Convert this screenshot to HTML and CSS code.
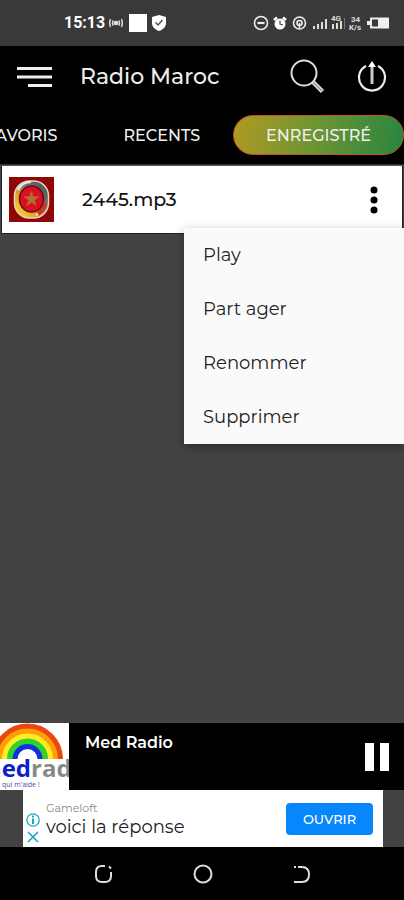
FILE: index.html
```html
<!DOCTYPE html>
<html lang="fr">
<head>
<meta charset="utf-8">
<meta name="viewport" content="width=device-width, initial-scale=1">
<title>Radio Maroc</title>
<link rel="stylesheet" href="styles.css">
</head>
<body>
<div class="status">
  <div class="status-group">
    <span class="clock">15:13</span>
    <svg width="14" height="12" viewBox="0 0 14 12" fill="none" stroke="#ddd" stroke-width="1.5"><circle cx="7" cy="6" r="1.6" fill="#ddd"/><path d="M4.300 3.500q-1.500 2.500 0 5M9.700 3.500q1.500 2.500 0 5M1.500 2q-1.500 4 0 8M12.500 2q1.500 4 0 8"/></svg>
    <span class="square"></span>
    <svg width="16" height="18" viewBox="0 0 16 18"><path d="M8 1l7 2v6c0 4-3 6.500-7 8-4-1.500-7-4-7-8V3z" fill="#fff"/><path d="M4.500 8.500l2.500 2.500 4.500-5" fill="none" stroke="#555" stroke-width="1.500"/></svg>
  </div>
  <svg class="status-icons" width="140" height="20" viewBox="0 0 140 20">
    <g fill="none" stroke="#eee" stroke-width="1.600">
      <circle cx="9" cy="10" r="6.500"/><path d="M5.500 10h7" stroke-width="2.200"/>
      <circle cx="47.500" cy="10" r="6"/><circle cx="47.500" cy="10" r="2.500"/><path d="M47.500 10v5"/>
    </g>
    <circle cx="28" cy="11" r="5.500" fill="#fff"/><path d="M22 7l3-2.500M34 7l-3-2.500" stroke="#fff" stroke-width="2.500"/><path d="M28 7.500V11l3 1" fill="none" stroke="#444" stroke-width="1.200"/>
    <path d="M61 13h2v3h-2zM65 11h2v5h-2zM69 9h2v7h-2zM73 6h2v10h-2zM80 11h2v5h-2zM84 10h2v6h-2zM88 8h2v8h-2z" fill="#ddd"/>
    <path d="M92 5h1v11h-1z" fill="#777"/>
    <text class="tiny" x="79" y="8">4G</text>
    <text class="tiny" x="99" y="9">34</text><text class="tiny" x="97" y="17">K/s</text>
    <path d="M115 8h3V4.500h19v11h-19V12h-3z" fill="#eee"/><path d="M120 6.500h6v7h-6z" fill="#393939"/>
  </svg>
</div>

<header class="header">
  <button class="icon-button" aria-label="Menu"><svg width="36" height="24" viewBox="0 0 36 24" stroke="#eee" stroke-width="3"><path d="M0 3.500h35M0 12h35M11 20.500h24"/></svg></button>
  <h1 class="title">Radio Maroc</h1>
  <button class="icon-button" aria-label="Rechercher"><svg width="36" height="36" viewBox="0 0 36 36" fill="none" stroke="#ddd"><circle cx="15" cy="14" r="12.500" stroke-width="2"/><path d="M24 23l9.500 9.500" stroke-width="4.500"/><path d="M24.500 23.500l8.500 8.500" stroke="#999" stroke-width="1.500"/></svg></button>
  <button class="icon-button power" aria-label="Quitter"><svg width="30" height="34" viewBox="0 0 30 34" fill="none" stroke="#eee"><path d="M9 6a13 13 0 1 0 12 0" stroke-width="2.200"/><path d="M15 24V5" stroke="#ccc" stroke-width="3"/><path d="M15 1l4 6h-8z" fill="#fff" stroke="none"/></svg></button>
</header>

<nav class="tabs">
  <a class="tab" href="#favoris">FAVORIS</a>
  <a class="tab" href="#recents">RECENTS</a>
  <a class="tab active" href="#enregistre">ENREGISTRÉ</a>
</nav>

<main class="content">
  <article class="track">
    <svg class="cover" width="45" height="45" viewBox="0 0 45 45">
      <defs><linearGradient id="ring" x1="0" y1="1" x2="1" y2="0"><stop offset="0" stop-color="#ffe52a"/><stop offset=".35" stop-color="#e8a326"/><stop offset=".6" stop-color="#777"/><stop offset="1" stop-color="#444"/></linearGradient></defs>
      <path d="M0 0h45v45H0z" fill="#8f0606"/>
      <rect x="5.500" y="4" width="34" height="37" rx="15" fill="url(#ring)" stroke="#e6d2c0" stroke-width="1.500"/>
      <path d="M9 13q4-8 13-8M35 27q-1 8-8 11" fill="none" stroke="#eee" stroke-width="2"/>
      <path d="M36 26q-1 7-7 11" fill="none" stroke="#d33515" stroke-width="4"/>
      <ellipse cx="22.500" cy="22" rx="12" ry="13" fill="#e30b20" stroke="#521515" stroke-width="1.500"/>
      <path d="M22.500 14.500l1.800 5.300h5.500l-4.400 3.300 1.600 5.400-4.500-3.200-4.500 3.200 1.600-5.400-4.400-3.300h5.500z" fill="#b7702b" stroke="#a5672b"/>
    </svg>
    <h2 class="track-name">2445.mp3</h2>
    <button class="icon-button more" aria-label="Options"><svg width="8" height="28" viewBox="0 0 8 28"><circle cx="4" cy="4" r="3.500"/><circle cx="4" cy="14" r="3.500"/><circle cx="4" cy="24" r="3.500"/></svg></button>
    <div class="menu">
      <button class="menu-item">Play</button>
      <button class="menu-item">Part ager</button>
      <button class="menu-item">Renommer</button>
      <button class="menu-item">Supprimer</button>
    </div>
  </article>
</main>

<section class="player">
  <svg class="station" width="69" height="67" viewBox="0 0 69 67">
    <path d="M0 0h69v67H0z" fill="#fff"/>
    <g fill="none" stroke-width="6">
      <path d="M-5 36a32.500 32.500 0 0 1 65 0" stroke="#e94812"/>
      <path d="M0 36a27.500 27.500 0 0 1 55 0" stroke="#ff9d0a"/>
      <path d="M5 36a22.500 22.500 0 0 1 45 0" stroke="#ffed22"/>
      <path d="M10 36a17.500 17.500 0 0 1 35 0" stroke="#2fd32b"/>
      <path d="M15 36a12.500 12.500 0 0 1 25 0" stroke="#1331d9" stroke-width="5"/>
    </g>
    <text class="logo" x="31" y="54" text-anchor="end" fill="#0b20c8">med</text>
    <text class="logo" x="31" y="54" fill="#888">radio</text>
    <text class="slogan" x="2" y="64">qui m'aide !</text>
  </svg>
  <h2 class="station-name">Med Radio</h2>
  <button class="icon-button pause" aria-label="Pause"><svg width="26" height="28" viewBox="0 0 26 28" fill="#fff"><path d="M1 0h9v28H1zM16 0h9v28h-9z"/></svg></button>
</section>

<aside class="ad">
  <svg class="ad-marks" width="14" height="34" viewBox="0 0 14 34" fill="none" stroke="#15a9c4" stroke-width="1.300"><circle cx="7" cy="7" r="6.200"/><path d="M7 5.500V11M7 2.500v2" stroke-width="2"/><path d="M2 19l10 10M12 19L2 29" stroke-width="1.600"/></svg>
  <div class="ad-copy">
    <span class="ad-brand">Gameloft</span>
    <span class="ad-text">voici la réponse</span>
  </div>
  <button class="ad-button">OUVRIR</button>
</aside>

<nav class="system">
  <button class="icon-button" aria-label="Applications"><svg width="20" height="20" viewBox="0 0 20 20" fill="none" stroke="#ddd" stroke-width="2"><path d="M11 2H8Q2 2 2 8v4q0 6 6 6h3q6 0 6-6V8"/><path d="M15 2.500l2 2"/></svg></button>
  <button class="icon-button" aria-label="Accueil"><svg width="20" height="20" viewBox="0 0 20 20" fill="none" stroke="#ddd" stroke-width="2"><circle cx="10" cy="10" r="8.500"/></svg></button>
  <button class="icon-button" aria-label="Retour"><svg width="20" height="20" viewBox="0 0 20 20" fill="none" stroke="#ddd" stroke-width="2"><path d="M3 3h2M7 3h4q7 0 7 7.500T11 18H3"/></svg></button>
</nav>
</body>
</html>
```

FILE: styles.css
```css
* {
  box-sizing: border-box;
}

body {
  margin: 0;
  min-height: 100vh;
  display: flex;
  flex-direction: column;
  overflow-x: hidden;
  background: #434343;
  color: #fff;
  font-family: Montserrat, Inter, "Liberation Sans", sans-serif;
  font-weight: 500;
}

button {
  border: 0;
  font: inherit;
  color: inherit;
}

svg {
  display: block;
  flex: none;
}

h1,
h2 {
  margin: 0;
  font-weight: 500;
}

.icon-button {
  padding: 0;
  background: none;
}

.status {
  height: 46px;
  padding: 0 12px 0 64px;
  display: flex;
  align-items: center;
  justify-content: space-between;
  background: #393939;
}

.status-group {
  display: flex;
  align-items: center;
  gap: 4px;
}

.clock {
  font: 700 16px/20px Roboto, sans-serif;
}

.square {
  width: 18px;
  height: 18px;
  margin-left: 2px;
  background: #fff;
}

.tiny {
  font: 700 8px Roboto, sans-serif;
  fill: #ddd;
}

.header {
  height: 62px;
  padding: 0 17px;
  display: flex;
  align-items: center;
  background: #000;
}

.title {
  flex: 1;
  margin-left: 27px;
  font-size: 22px;
  line-height: 32px;
  color: #eee;
}

.power {
  margin-left: 32px;
}

.tabs {
  height: 57px;
  padding-bottom: 2px;
  display: flex;
  align-items: center;
  justify-content: flex-end;
  overflow: hidden;
  background: #000;
  border-bottom: 1px solid #333;
}

.tab {
  flex: none;
  height: 40px;
  padding: 0 32px;
  border: 1px solid transparent;
  border-radius: 20px;
  color: #eee;
  font-size: 16px;
  line-height: 40px;
  text-decoration: none;
}

.active {
  border-color: #c7502a;
  background: linear-gradient(100deg, #b09a22, #6a9434 50%, #288540);
}

.content {
  flex: 1;
}

.track {
  position: relative;
  height: 69px;
  margin: 0 1px;
  padding: 0 24px 0 7px;
  display: flex;
  align-items: center;
  background: #fff;
  border: 1px solid #222;
  border-top-color: #555;
  color: #111;
}

.track-name {
  flex: 1;
  margin-left: 28px;
  font-size: 19px;
  line-height: 28px;
}

.menu {
  position: absolute;
  top: 62px;
  right: -2px;
  width: 220px;
  background: #fafafa;
  box-shadow: 0 3px 9px rgba(0, 0, 0, 0.35);
}

.menu-item {
  display: block;
  width: 100%;
  height: 54px;
  padding: 0 19px;
  background: none;
  color: #222;
  font-size: 18px;
  font-weight: 400;
  text-align: left;
}

.player {
  height: 67px;
  padding-right: 14px;
  display: flex;
  align-items: center;
  background: #000;
}

.logo {
  font: 700 24px "Open Sans", sans-serif;
}

.slogan {
  font: 400 7px "Open Sans", sans-serif;
  fill: #4450b0;
}

.station-name {
  flex: 1;
  align-self: flex-start;
  margin: 8px 0 0 16px;
  font-size: 16px;
  font-weight: 600;
  line-height: 24px;
}

.ad {
  height: 57px;
  margin: 0 21px 0 23px;
  padding: 0 10px 0 3px;
  display: flex;
  align-items: center;
  background: #fff;
}

.ad-marks {
  align-self: flex-end;
}

.ad-copy {
  flex: 1;
  margin-left: 6px;
  display: flex;
  flex-direction: column;
}

.ad-brand {
  color: #888;
  font-size: 11px;
  font-weight: 400;
  line-height: 16px;
}

.ad-text {
  color: #222;
  font-size: 18px;
  font-weight: 400;
  line-height: 22px;
}

.ad-button {
  width: 87px;
  height: 32px;
  padding: 0;
  border-radius: 4px;
  background: #0886fb;
  font-size: 13px;
}

.system {
  height: 53px;
  padding: 0 93px 0 94px;
  display: flex;
  align-items: center;
  justify-content: space-between;
  background: #000;
}
```
